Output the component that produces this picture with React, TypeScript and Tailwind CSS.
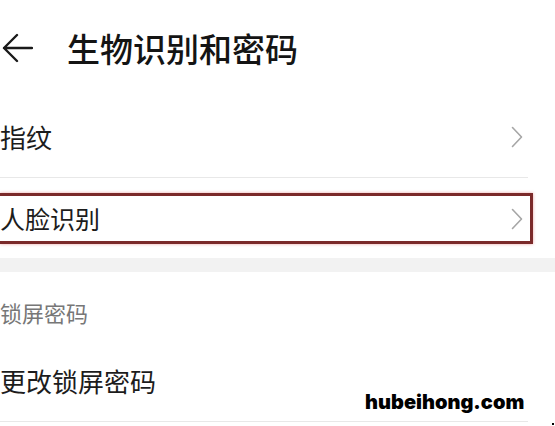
import React from 'react';

const cjk = { fontFamily: '"Noto Sans CJK SC", "Noto Sans", sans-serif' };

function Chevron() {
  return (
    <svg width="12" height="22" viewBox="0 0 12 22" fill="none" className="shrink-0">
      <path d="M1.5 1.5 L10.5 11 L1.5 20.5" stroke="#a6a6a6" strokeWidth="1.6" strokeLinecap="round" strokeLinejoin="round" />
    </svg>
  );
}

export default function App() {
  return (
    <div className="relative w-[555px] h-[426px] overflow-hidden bg-white text-[#1c1c1c]" style={cjk}>
      {/* Header */}
      <header className="flex items-center h-[96px]">
        <svg width="31" height="30" viewBox="0 0 31 30" fill="none" className="ml-[2px] shrink-0">
          <path d="M30 15 H2 M15 2 L2 15 L15 28" stroke="#1a1a1a" strokeWidth="2.4" strokeLinecap="round" strokeLinejoin="round" />
        </svg>
        <h1 className="ml-[34px] text-[33px] leading-none font-medium text-[#141414]">生物识别和密码</h1>
      </header>

      {/* 指纹 */}
      <div className="flex items-center justify-between h-[81px] w-[530px] pr-[7px]">
        <span className="text-[26px] leading-none">指纹</span>
        <Chevron />
      </div>
      <div className="h-px w-[528px] bg-[#e8e8e8]" />

      {/* 人脸识别 (highlighted) */}
      <div className="mt-[15px] flex items-center justify-between h-[51px] w-[533px] pr-[7px] border-[3px] border-l-0 border-[#7b2a2a] shadow-[0_0_3px_rgba(220,90,90,0.55)]">
        <span className="text-[25px] leading-none">人脸识别</span>
        <Chevron />
      </div>

      <div className="mt-[14px] h-[14px] bg-[#f2f2f2]" />

      {/* 锁屏密码 */}
      <div className="flex items-center h-[80px]">
        <span className="text-[22px] leading-none text-[#777]">锁屏密码</span>
      </div>
      <div className="flex items-center h-[58px]">
        <span className="text-[26px] leading-none">更改锁屏密码</span>
      </div>
      <div className="mt-[11px] h-px w-[528px] bg-[#e8e8e8]" />

      {/* watermark */}
      <div
        className="absolute left-[365px] top-[392px] text-[20px] font-black leading-none text-black"
        style={{ fontFamily: 'Inter, sans-serif' }}
      >
        hubeihong.com
      </div>
      <div className="absolute left-[552px] top-[423px] w-[2px] h-[2px] bg-black" />
    </div>
  );
}
